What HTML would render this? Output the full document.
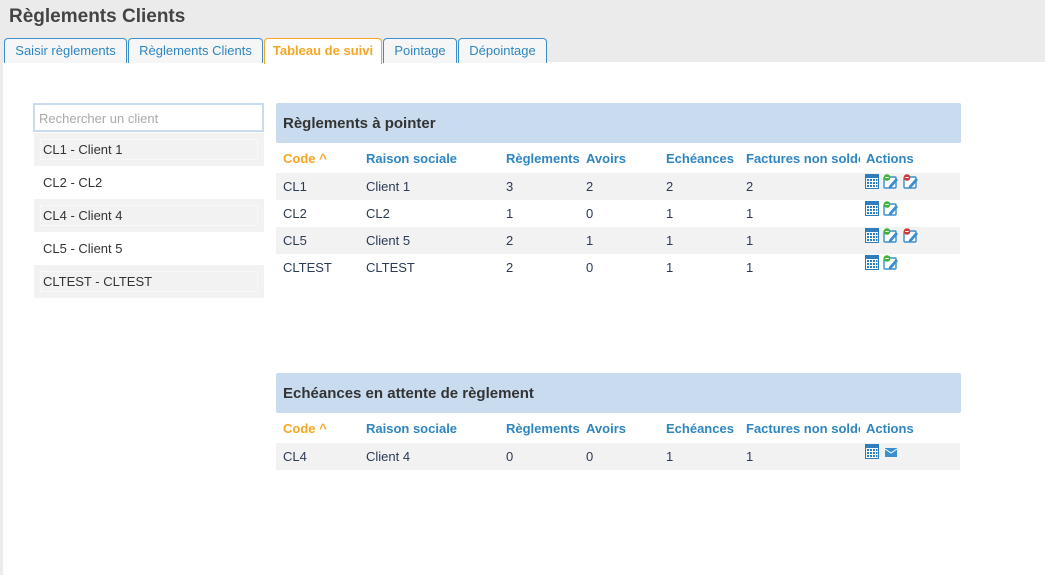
<!DOCTYPE html>
<html><head><meta charset="utf-8"><style>
*{margin:0;padding:0;box-sizing:border-box}
body{width:1045px;height:575px;background:#ebebeb;font-family:"Liberation Sans",sans-serif;position:relative;overflow:hidden;color:#333}
.abs{position:absolute}
h1{position:absolute;left:9px;top:6px;font-size:19px;font-weight:bold;color:#444}
.tab{position:absolute;top:38px;height:25px;border:1px solid #3d8ec9;border-bottom:none;border-radius:4px 4px 0 0;background:#f6f6f6;color:#2e86c1;font-size:13px;text-align:center;line-height:24px}
.tab.act{border-color:#f5a623;background:#fff;color:#f5a623;font-weight:bold;height:26px}
.main{position:absolute;left:3px;top:62px;right:0;bottom:0;background:#fff}
.search{position:absolute;left:33px;top:103px;width:231px;height:29px;border:2px solid #c9dcef;font-size:13px;color:#aaa;padding:6px 4px}
.item{position:absolute;left:34px;width:230px;height:33px;font-size:13px;color:#333;line-height:33px;padding-left:9px}
.item.g{background:#f2f2f2}
.item.g span{position:absolute;left:6px;right:6px;top:6px;bottom:6px;border:1px dotted #fff}
.ph{position:absolute;left:276px;width:685px;height:40px;background:#c9dcef;font-weight:bold;font-size:15px;color:#333;padding:12px 7px;border-radius:2px}
.row{position:absolute;left:276px;width:684px;height:27px;font-size:13px}
.row.g{background:#f2f2f2}
.row div{position:absolute;top:6px}
.hd div{font-weight:bold;color:#2e86c1;top:6px}
.hd div.c0{color:#f5a623}
.c0{left:7px}.c1{left:90px}.c2{left:230px}.c3{left:310px}.c4{left:390px}.c5{left:470px;white-space:nowrap;width:114px;overflow:hidden}.c6{left:590px}
.num{color:#2b3a55}
.ic{position:absolute;top:1px}
</style></head><body>
<h1>Règlements Clients</h1>
<div class="main"></div>
<div class="tab" style="left:4px;width:123px">Saisir règlements</div>
<div class="tab" style="left:128px;width:135px">Règlements Clients</div>
<div class="tab act" style="left:264px;width:118px">Tableau de suivi</div>
<div class="tab" style="left:383px;width:74px">Pointage</div>
<div class="tab" style="left:458px;width:89px">Dépointage</div>

<div class="search">Rechercher un client</div>
<div class="item g" style="top:133px"><span></span>CL1 - Client 1</div>
<div class="item" style="top:166px">CL2 - CL2</div>
<div class="item g" style="top:199px"><span></span>CL4 - Client 4</div>
<div class="item" style="top:232px">CL5 - Client 5</div>
<div class="item g" style="top:265px"><span></span>CLTEST - CLTEST</div>

<svg width="0" height="0" style="position:absolute"><defs>
<g id="calc"><rect x="0.5" y="0.5" width="13" height="14" fill="#fff" stroke="#2e7dbf"/><rect x="1" y="1" width="12" height="3" fill="#2e7dbf"/><g fill="#2e7dbf"><rect x="2" y="5" width="2" height="2"/><rect x="5" y="5" width="2" height="2"/><rect x="8" y="5" width="2" height="2"/><rect x="11" y="5" width="1.5" height="2"/><rect x="2" y="8" width="2" height="2"/><rect x="5" y="8" width="2" height="2"/><rect x="8" y="8" width="2" height="2"/><rect x="11" y="8" width="1.5" height="2"/><rect x="2" y="11" width="2" height="2"/><rect x="5" y="11" width="2" height="2"/><rect x="8" y="11" width="2" height="2"/><rect x="11" y="11" width="1.5" height="2"/></g></g>
<g id="ed"><rect x="1" y="3" width="12" height="11" fill="#fff" stroke="#3a8fcf" stroke-width="1.4" rx="1"/><path d="M6 12 L13 4 L15 6 L8 14 L5.5 14.5Z" fill="#3a8fcf"/></g>
</defs></svg>

<div class="ph" style="top:103px">Règlements à pointer</div>
<div class="row hd" style="top:145px"><div class="c0">Code ^</div><div class="c1">Raison sociale</div><div class="c2">Règlements</div><div class="c3">Avoirs</div><div class="c4">Echéances</div><div class="c5">Factures non soldées</div><div class="c6">Actions</div></div>
<div class="row g num" style="top:173px"><div class="c0">CL1</div><div class="c1">Client 1</div><div class="c2">3</div><div class="c3">2</div><div class="c4">2</div><div class="c5">2</div>
<svg class="ic" style="left:589px" width="60" height="16"><use href="#calc"/><g transform="translate(18,0)"><use href="#ed"/><circle cx="4" cy="3.5" r="3.3" fill="#3cb43c"/><rect x="2.3" y="3" width="3.4" height="1" fill="#fff"/></g><g transform="translate(38,0)"><use href="#ed"/><circle cx="4" cy="3.5" r="3.3" fill="#d03a3a"/><rect x="2.3" y="3" width="3.4" height="1" fill="#fff"/></g></svg></div>
<div class="row num" style="top:200px"><div class="c0">CL2</div><div class="c1">CL2</div><div class="c2">1</div><div class="c3">0</div><div class="c4">1</div><div class="c5">1</div>
<svg class="ic" style="left:589px" width="60" height="16"><use href="#calc"/><g transform="translate(18,0)"><use href="#ed"/><circle cx="4" cy="3.5" r="3.3" fill="#3cb43c"/><rect x="2.3" y="3" width="3.4" height="1" fill="#fff"/></g></svg></div>
<div class="row g num" style="top:227px"><div class="c0">CL5</div><div class="c1">Client 5</div><div class="c2">2</div><div class="c3">1</div><div class="c4">1</div><div class="c5">1</div>
<svg class="ic" style="left:589px" width="60" height="16"><use href="#calc"/><g transform="translate(18,0)"><use href="#ed"/><circle cx="4" cy="3.5" r="3.3" fill="#3cb43c"/><rect x="2.3" y="3" width="3.4" height="1" fill="#fff"/></g><g transform="translate(38,0)"><use href="#ed"/><circle cx="4" cy="3.5" r="3.3" fill="#d03a3a"/><rect x="2.3" y="3" width="3.4" height="1" fill="#fff"/></g></svg></div>
<div class="row num" style="top:254px"><div class="c0">CLTEST</div><div class="c1">CLTEST</div><div class="c2">2</div><div class="c3">0</div><div class="c4">1</div><div class="c5">1</div>
<svg class="ic" style="left:589px" width="60" height="16"><use href="#calc"/><g transform="translate(18,0)"><use href="#ed"/><circle cx="4" cy="3.5" r="3.3" fill="#3cb43c"/><rect x="2.3" y="3" width="3.4" height="1" fill="#fff"/></g></svg></div>

<div class="ph" style="top:373px">Echéances en attente de règlement</div>
<div class="row hd" style="top:415px"><div class="c0">Code ^</div><div class="c1">Raison sociale</div><div class="c2">Règlements</div><div class="c3">Avoirs</div><div class="c4">Echéances</div><div class="c5">Factures non soldées</div><div class="c6">Actions</div></div>
<div class="row g num" style="top:443px"><div class="c0">CL4</div><div class="c1">Client 4</div><div class="c2">0</div><div class="c3">0</div><div class="c4">1</div><div class="c5">1</div>
<svg class="ic" style="left:589px" width="40" height="16"><use href="#calc"/><g transform="translate(20,4)"><rect x="0" y="0" width="12" height="9" fill="#3a8fcf"/><path d="M0 1 L6 5 L12 1" stroke="#fff" fill="none"/></g></svg></div>
</body></html>
